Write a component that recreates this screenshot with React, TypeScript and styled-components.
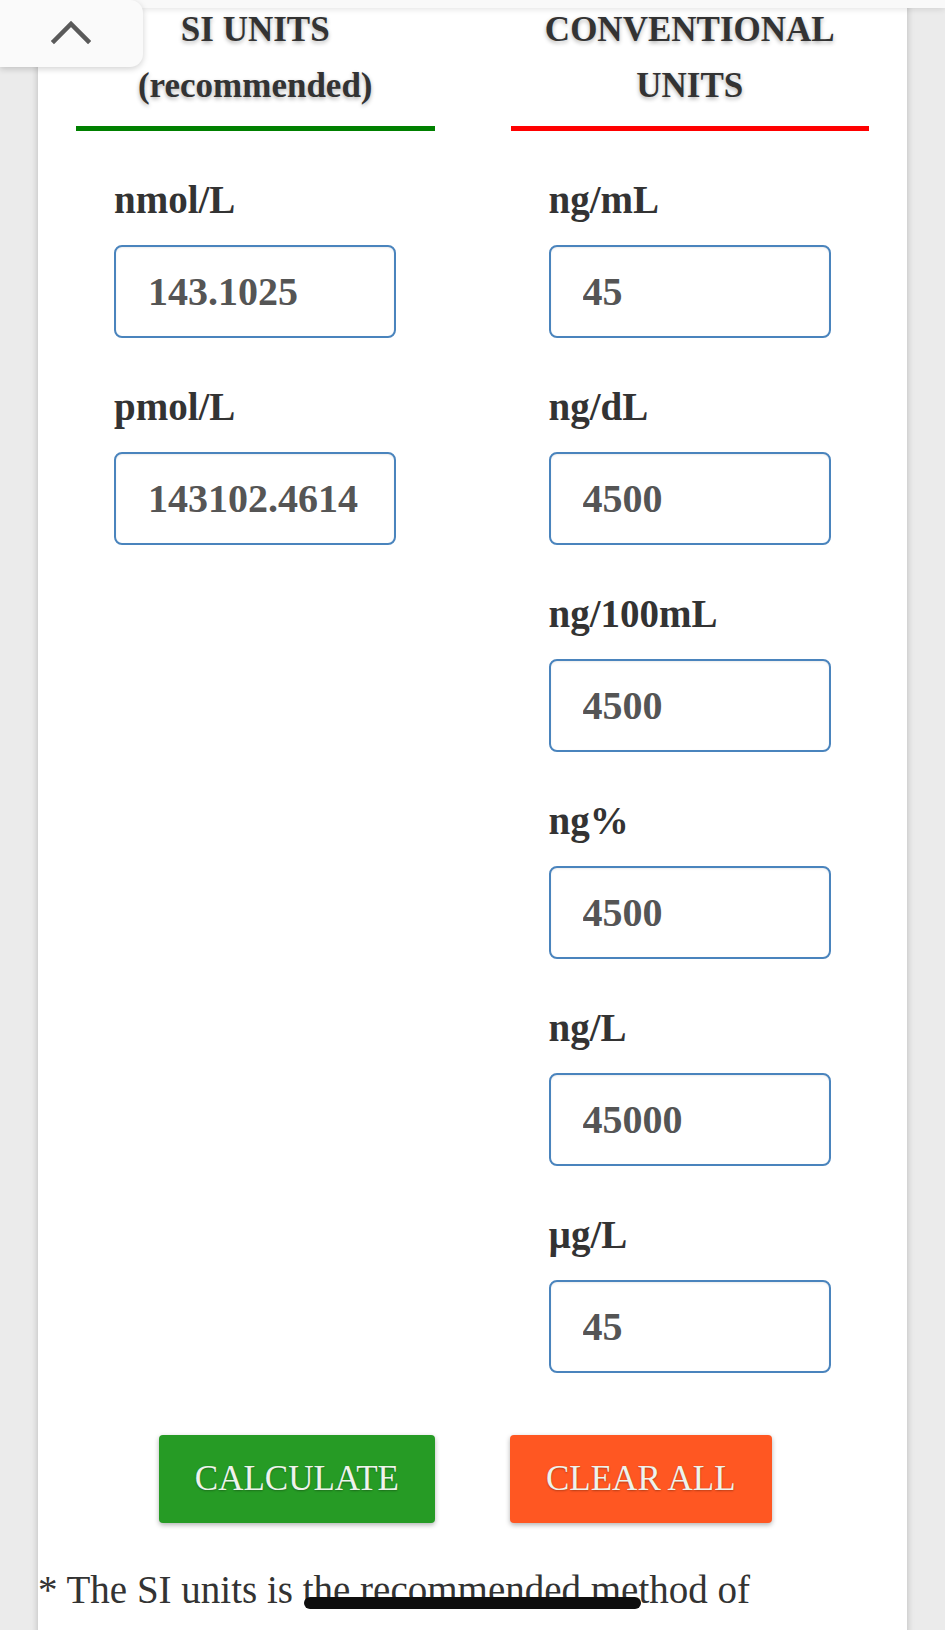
import React from 'react';
import styled, { createGlobalStyle } from 'styled-components';

const serif = '"Liberation Serif", "Times New Roman", Times, serif';

const GlobalStyle = createGlobalStyle`
  html, body {
    margin: 0;
    padding: 0;
    background: #ebebeb;
  }
  body {
    font-family: ${serif};
    color: #333;
  }
`;

const TopStrip = styled.div`
  position: fixed;
  top: 0;
  left: 0;
  right: 0;
  height: 8px;
  background: #f9f9f9;
  box-shadow: 0 1px 6px rgba(0, 0, 0, 0.12);
  z-index: 2;
`;

const BackToTop = styled.button`
  position: fixed;
  top: 0;
  left: 0;
  width: 143px;
  height: 67px;
  border: none;
  padding: 0;
  background: #fafafa;
  border-radius: 0 13px 13px 0;
  box-shadow: 0 2px 6px rgba(0, 0, 0, 0.18);
  display: flex;
  align-items: center;
  justify-content: center;
  z-index: 3;
  svg {
    margin-left: -2px;
    margin-top: -2px;
  }
`;

const Card = styled.main`
  margin: 0 38px;
  background: #fff;
  box-shadow: 0 0 7px rgba(0, 0, 0, 0.22);
  min-height: 100vh;
  padding-bottom: 60px;
`;

const Columns = styled.div`
  display: grid;
  grid-template-columns: 1fr 1fr;
  align-items: start;
`;

const Column = styled.section`
  padding: 0 38px;
`;

const Heading = styled.h2`
  margin: 0;
  padding-top: 2px;
  font-size: 35px;
  line-height: 56px;
  font-weight: bold;
  text-align: center;
  color: #333;
  text-shadow: 0 2px 4px rgba(0, 0, 0, 0.3);
`;

const Rule = styled.div<{ $color: string }>`
  height: 5px;
  margin-top: 12px;
  background: ${(p) => p.$color};
`;

const Field = styled.div`
  margin-top: 47px;
  margin-left: 38px;
`;

const Label = styled.label`
  display: block;
  font-size: 39px;
  line-height: 44px;
  font-weight: bold;
  color: #333;
`;

const ValueInput = styled.input`
  display: block;
  box-sizing: border-box;
  width: 282px;
  height: 93px;
  margin-top: 23px;
  padding: 0 32px;
  border: 2px solid #4a84bd;
  border-radius: 8px;
  background: #fff;
  box-shadow: inset 0 1px 2px rgba(0, 0, 0, 0.08);
  font-family: ${serif};
  font-size: 40px;
  font-weight: bold;
  color: #555;
  outline: none;
`;

const ButtonRow = styled.div`
  display: grid;
  grid-template-columns: 1fr 1fr;
  column-gap: 75px;
  padding: 0 38px;
  margin-top: 62px;
  > button:first-child {
    justify-self: end;
  }
  > button:last-child {
    justify-self: start;
  }
`;

const ActionButton = styled.button<{ $bg: string }>`
  height: 88px;
  padding: 0 36px;
  border: none;
  border-radius: 4px;
  background: ${(p) => p.$bg};
  box-shadow: 0 2px 5px rgba(0, 0, 0, 0.3);
  font-family: ${serif};
  font-size: 35px;
  color: #eef3ec;
  text-shadow: 0 1px 2px rgba(0, 0, 0, 0.3);
  text-transform: uppercase;
`;

const Note = styled.p`
  margin: 38px 0 0;
  padding-right: 20px;
  font-size: 39px;
  line-height: 1.5;
  color: #333;
`;

const HomeIndicator = styled.div`
  position: fixed;
  left: 50%;
  bottom: 21px;
  width: 337px;
  height: 12px;
  margin-left: -169px;
  border-radius: 6px;
  background: #0e0e0e;
  z-index: 4;
`;

type Unit = { label: string; value: string };

const siUnits: Unit[] = [
  { label: 'nmol/L', value: '143.1025' },
  { label: 'pmol/L', value: '143102.4614' },
];

const conventionalUnits: Unit[] = [
  { label: 'ng/mL', value: '45' },
  { label: 'ng/dL', value: '4500' },
  { label: 'ng/100mL', value: '4500' },
  { label: 'ng%', value: '4500' },
  { label: 'ng/L', value: '45000' },
  { label: 'µg/L', value: '45' },
];

const UnitColumn = ({
  title,
  subtitle,
  color,
  units,
}: {
  title: string;
  subtitle: string;
  color: string;
  units: Unit[];
}) => (
  <Column>
    <Heading>
      {title}
      <br />
      {subtitle}
    </Heading>
    <Rule $color={color} />
    {units.map((u) => (
      <Field key={u.label}>
        <Label>{u.label}</Label>
        <ValueInput type="text" defaultValue={u.value} />
      </Field>
    ))}
  </Column>
);

const App = () => {
  return (
    <>
      <GlobalStyle />
      <TopStrip />
      <BackToTop type="button" aria-label="Back to top">
        <svg width="40" height="26" viewBox="0 0 40 26">
          <polyline
            points="3,21 20,4 37,21"
            fill="none"
            stroke="#5a5a5a"
            strokeWidth="4.5"
            strokeLinecap="square"
          />
        </svg>
      </BackToTop>
      <Card>
        <Columns>
          <UnitColumn title="SI UNITS" subtitle="(recommended)" color="#008000" units={siUnits} />
          <UnitColumn title="CONVENTIONAL" subtitle="UNITS" color="#ff0000" units={conventionalUnits} />
        </Columns>
        <ButtonRow>
          <ActionButton type="button" $bg="#269b25">Calculate</ActionButton>
          <ActionButton type="button" $bg="#ff5722">Clear All</ActionButton>
        </ButtonRow>
        <Note>* The SI units is the recommended method of expressing laboratory results.</Note>
      </Card>
      <HomeIndicator />
    </>
  );
};

export default App;
